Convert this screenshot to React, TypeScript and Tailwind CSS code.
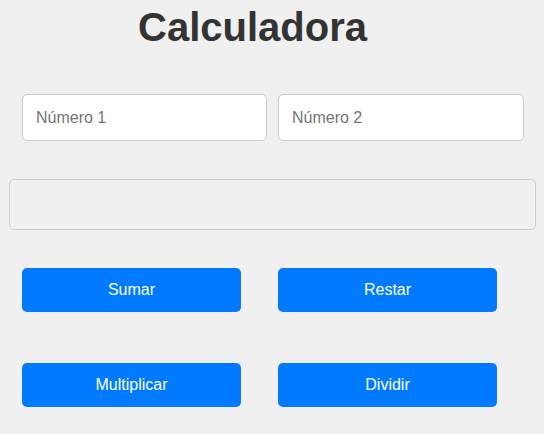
import { useState } from "react";

const btn =
  "w-[219px] h-[44px] rounded-[5px] bg-[#007bff] text-white text-[16px] hover:bg-[#0069d9]";

export default function App() {
  const [a, setA] = useState("");
  const [b, setB] = useState("");
  const [result, setResult] = useState("");

  const calc = (op: string) => {
    const x = parseFloat(a);
    const y = parseFloat(b);
    if (isNaN(x) || isNaN(y)) return setResult("");
    if (op === "+") setResult(String(x + y));
    if (op === "-") setResult(String(x - y));
    if (op === "*") setResult(String(x * y));
    if (op === "/") setResult(y === 0 ? "Error" : String(x / y));
  };

  return (
    <div className="min-h-[434px] w-[544px] bg-[#f0f0f0] font-['Liberation_Sans',Arial,sans-serif] text-[#333]">
      {/* Title */}
      <h1 className="w-[505px] pt-[4px] text-center text-[40px] font-bold leading-[46px]">
        Calculadora
      </h1>

      {/* Inputs */}
      <div className="mt-[44px] flex gap-[11px] pl-[22px]">
        <input
          value={a}
          onChange={(e) => setA(e.target.value)}
          placeholder="Número 1"
          className="h-[47px] w-[245px] rounded-[5px] border border-[#ccc] bg-white px-[13px] text-[16px] outline-none placeholder:text-[#757575]"
        />
        <input
          value={b}
          onChange={(e) => setB(e.target.value)}
          placeholder="Número 2"
          className="h-[47px] w-[246px] rounded-[5px] border border-[#ccc] bg-white px-[13px] text-[16px] outline-none placeholder:text-[#757575]"
        />
      </div>

      {/* Result */}
      <div className="ml-[9px] mt-[38px] flex h-[51px] w-[527px] items-center rounded-[5px] border border-[#ccc] px-[13px] text-[18px]">
        {result}
      </div>

      {/* Buttons */}
      <div className="mt-[38px] grid w-[497px] grid-cols-2 gap-x-[37px] gap-y-[51px] pl-[22px]">
        <button className={btn} onClick={() => calc("+")}>Sumar</button>
        <button className={btn} onClick={() => calc("-")}>Restar</button>
        <button className={btn} onClick={() => calc("*")}>Multiplicar</button>
        <button className={btn} onClick={() => calc("/")}>Dividir</button>
      </div>
    </div>
  );
}
